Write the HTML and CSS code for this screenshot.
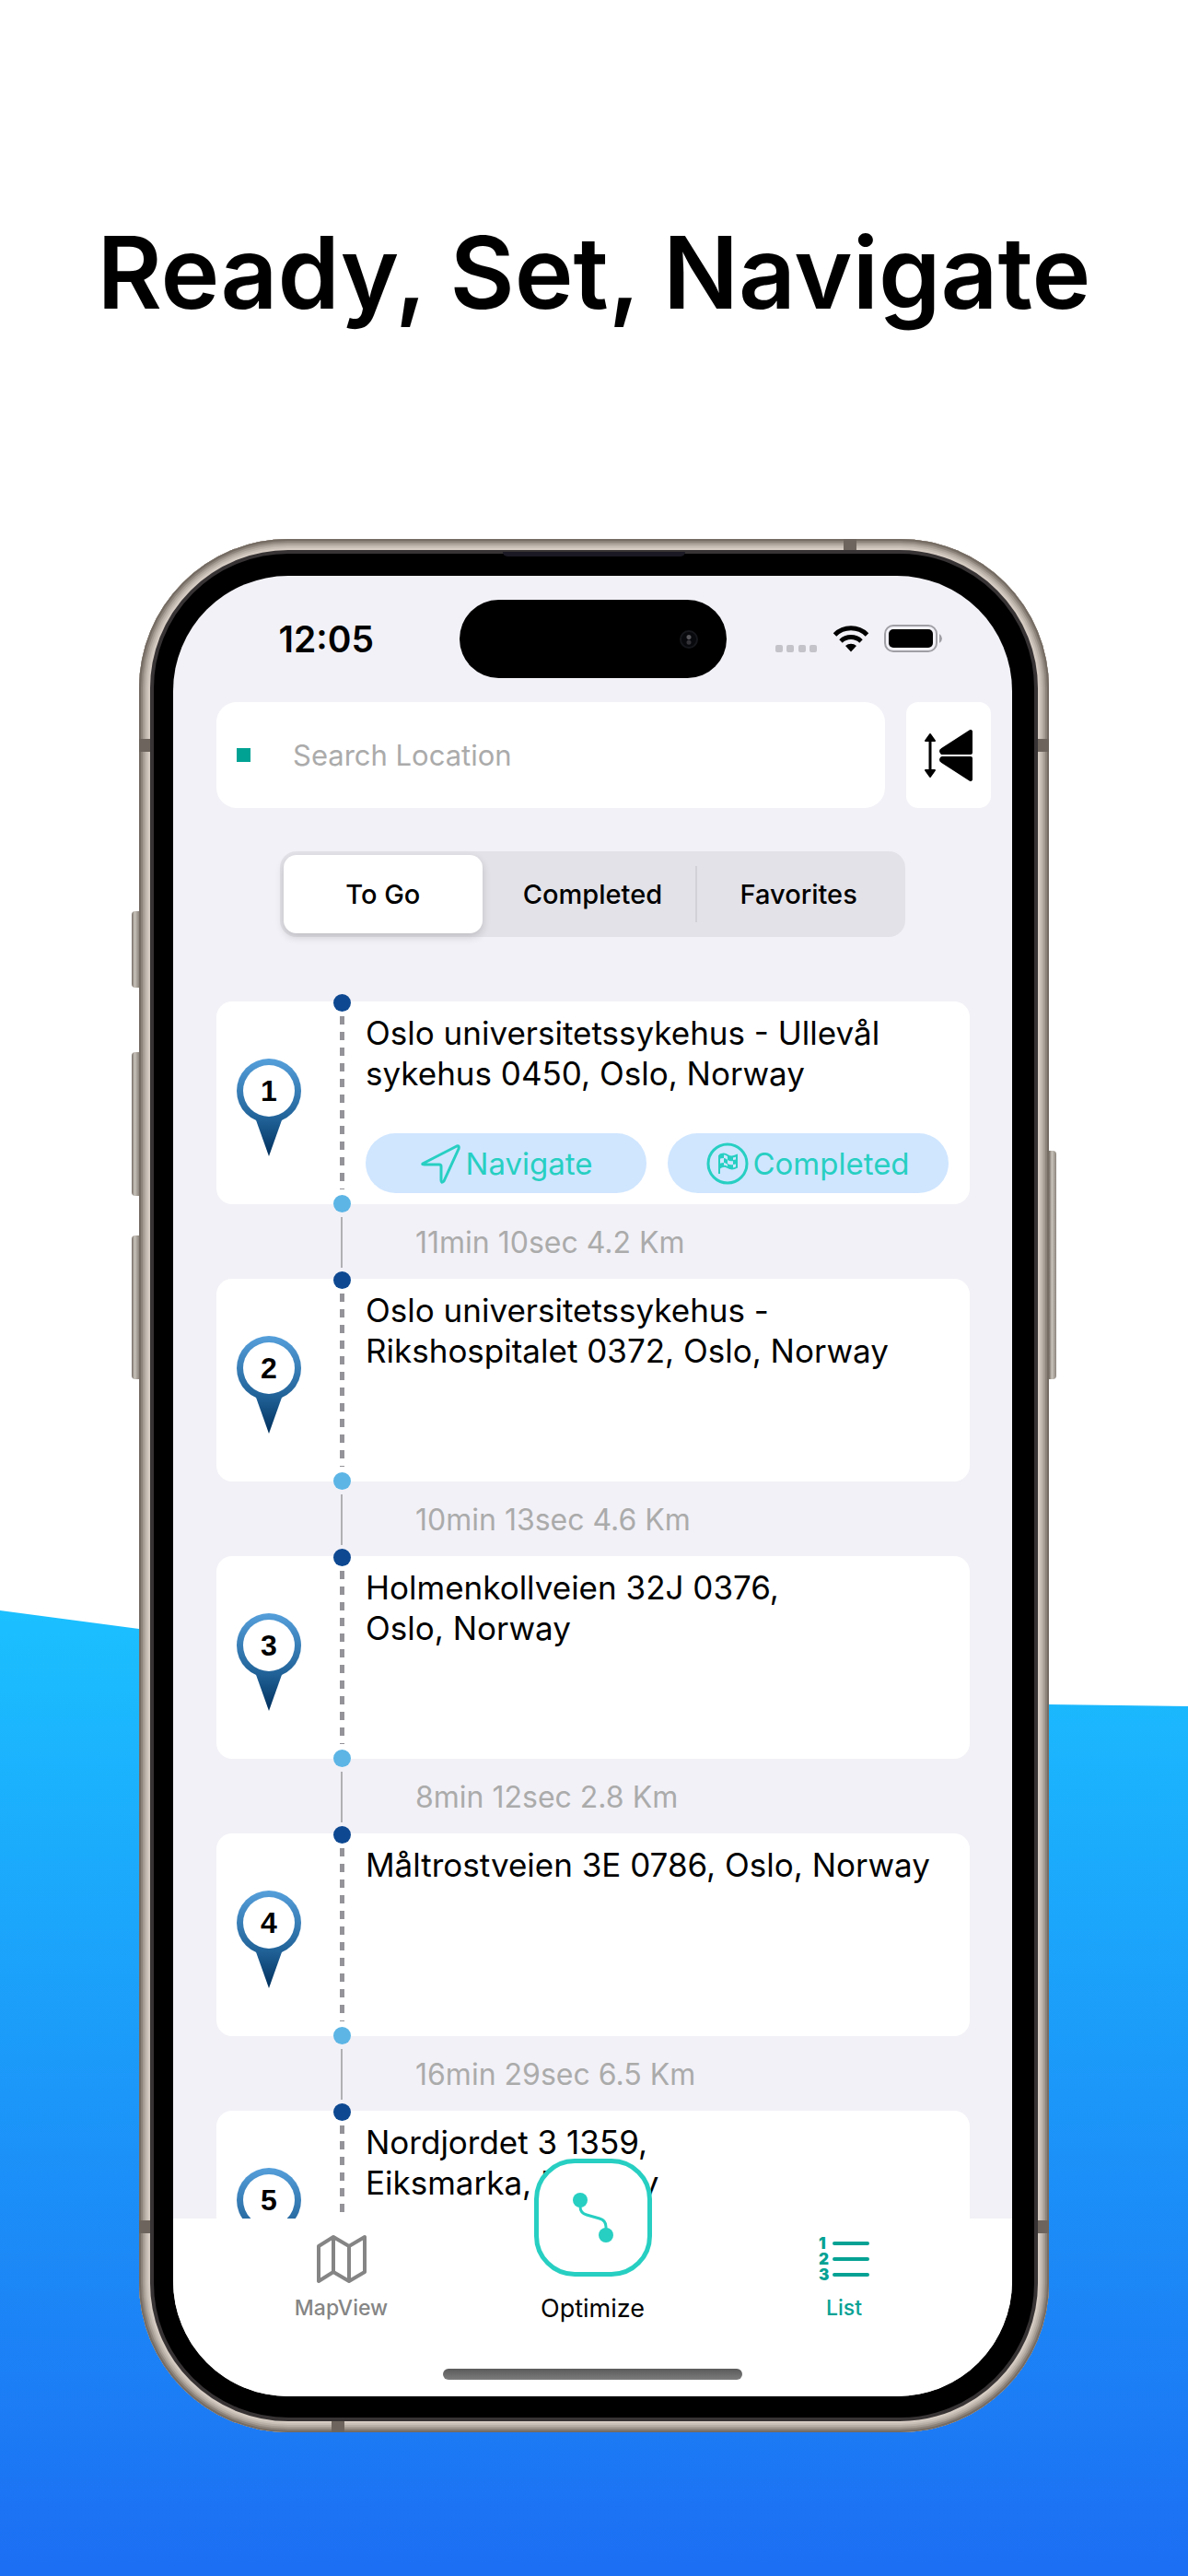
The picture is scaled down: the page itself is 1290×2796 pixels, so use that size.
FILE: index.html
```html
<!DOCTYPE html>
<html lang="en">
<head>
  <meta charset="UTF-8" />
  <meta name="viewport" content="width=device-width, initial-scale=1.0"/>
  <title>Ready, Set, Navigate</title>
  <link rel="stylesheet" href="styles.css">
</head>
<body>

  <svg class="wave" viewBox="0 0 1290 1048" preserveAspectRatio="none" aria-hidden="true">
    <defs>
      <linearGradient id="sky" x1="0" y1="0" x2="0" y2="1">
        <stop offset="0" stop-color="#1bc0ff"/>
        <stop offset="1" stop-color="#1c6ef3"/>
      </linearGradient>
    </defs>
    <path fill="url(#sky)" d="M0 0 L151 20 Q700 96 1139 102 L1290 104 V1048 H0 Z"/>
  </svg>

  <!-- shared shapes -->
  <svg class="defs" aria-hidden="true">
    <defs>
      <linearGradient id="pinFill" gradientUnits="userSpaceOnUse" x1="0" y1="0" x2="0" y2="106">
        <stop offset="0" stop-color="#559fdb"/>
        <stop offset="0.6" stop-color="#22649a"/>
        <stop offset="1" stop-color="#002f5c"/>
      </linearGradient>
      <symbol id="pin" viewBox="0 0 70 106">
        <circle cx="35" cy="35" r="35" fill="url(#pinFill)"/>
        <path fill="url(#pinFill)" d="M20 64 H50 L35 106 Z"/>
        <circle cx="35" cy="35" r="28" fill="#fff"/>
      </symbol>
    </defs>
  </svg>

  <h1 class="headline">Ready, Set, Navigate</h1>

  <div class="phone">
    <span class="side-btn action"></span>
    <span class="side-btn vol-up"></span>
    <span class="side-btn vol-down"></span>
    <span class="side-btn power"></span>
    <span class="band band-top"></span>
    <span class="band band-bottom"></span>
    <span class="band band-l1"></span>
    <span class="band band-r1"></span>
    <span class="band band-l2"></span>
    <span class="band band-r2"></span>

    <div class="bezel">
      <span class="speaker"></span>
      <div class="screen">

        <div class="status-bar">
          <span class="time">12:05</span>
          <div class="island"><span class="camera"></span></div>
          <div class="status-icons">
            <svg width="46" height="30" viewBox="0 0 46 30" fill="#c4c3c9">
              <rect x="0" y="22" width="8" height="8" rx="2"/>
              <rect x="12" y="22" width="8" height="8" rx="2"/>
              <rect x="25" y="22" width="8" height="8" rx="2"/>
              <rect x="37" y="22" width="8" height="8" rx="2"/>
            </svg>
            <svg width="40" height="30" viewBox="0 0 40 30" fill="none" stroke="#000" stroke-width="5">
              <path d="M2.500 11 A25 25 0 0 1 37.500 11"/>
              <path d="M9 18 A16 16 0 0 1 31 18"/>
              <path fill="#000" stroke="none" d="M20 29.500 L14 23 A9 9 0 0 1 26 23 Z"/>
            </svg>
            <svg width="64" height="30" viewBox="0 0 64 30">
              <rect x="1" y="1" width="56" height="28" rx="9" fill="none" stroke="#a09fa5" stroke-width="2"/>
              <rect x="5" y="5" width="48" height="20" rx="5"/>
              <path d="M60 10 q3 2 3 5 t-3 5 z" fill="#a09fa5"/>
            </svg>
          </div>
        </div>

        <form class="search-row">
          <label class="search-box">
            <span class="marker"></span>
            <input type="text" placeholder="Search Location" aria-label="Search Location">
          </label>
          <button type="button" class="flip-btn" aria-label="Reverse route">
            <svg width="54" height="58" viewBox="0 0 54 58" stroke-linejoin="round" stroke="#000">
              <path d="M7 12 V46" stroke-width="3"/>
              <path d="M7 6 L12 13 H2 Z M7 52 L12 45 H2 Z" stroke-width="2"/>
              <path d="M51 3 V26 H20 Q18 24 20 23 Z M51 55 V32 H20 Q18 34 20 35 Z" stroke-width="4"/>
            </svg>
          </button>
        </form>

        <div class="segments">
          <button class="segment active">To Go</button>
          <button class="segment">Completed</button>
          <button class="segment">Favorites</button>
        </div>

        <div class="stops">
          <div class="stop">
            <div class="pin"><svg width="70" height="106"><use href="#pin"/></svg><b>1</b></div>
            <div class="rail"></div>
            <div class="info">
              <p class="address">Oslo universitetssykehus - Ullevål<br>sykehus 0450, Oslo, Norway</p>
              <div class="actions">
                <button class="pill">
                  <svg width="46" height="46" viewBox="0 0 46 46" fill="none" stroke="currentColor" stroke-width="3" stroke-linejoin="round">
                    <path d="M3 23 L40 4 Q43 3 42 7 L26 42 Q23 45 23 41 V26 Q23 24 21 24 H5 Q2 24 3 23 Z"/>
                  </svg>
                  Navigate
                </button>
                <button class="pill">
                  <svg width="46" height="46" viewBox="0 0 46 46" fill="none" stroke="currentColor">
                    <circle cx="23" cy="23" r="21" stroke-width="3"/>
                    <path stroke-width="2" d="M14 34 V14 M14 14 Q19 11 23 14 T33 14 V27 Q28 30 23 27 T14 28"/>
                    <path fill="currentColor" stroke="none" d="M14 13 q2 -1 5 -1 v5 q-3 0 -5 1z M23 14 q3 2 6 1 v5 q-3 1 -6 -1z M19 17 q2 0 4 2 v5 q-2 -2 -4 -2z M29 19 q2 0 4 -1 v5 q-2 1 -4 1z M14 23 q3 -1 5 -1 v5 q-3 0 -5 1z M23 23 q3 2 6 1 v4 q-3 1 -6 -1z"/>
                  </svg>
                  Completed
                </button>
              </div>
            </div>
          </div>
          <div class="leg">11min 10sec 4.2 Km</div>

          <div class="stop">
            <div class="pin"><svg width="70" height="106"><use href="#pin"/></svg><b>2</b></div>
            <div class="rail"></div>
            <div class="info">
              <p class="address">Oslo universitetssykehus -<br>Rikshospitalet 0372, Oslo, Norway</p>
            </div>
          </div>
          <div class="leg">10min 13sec 4.6 Km</div>

          <div class="stop">
            <div class="pin"><svg width="70" height="106"><use href="#pin"/></svg><b>3</b></div>
            <div class="rail"></div>
            <div class="info">
              <p class="address">Holmenkollveien 32J 0376,<br>Oslo, Norway</p>
            </div>
          </div>
          <div class="leg">8min 12sec 2.8 Km</div>

          <div class="stop">
            <div class="pin"><svg width="70" height="106"><use href="#pin"/></svg><b>4</b></div>
            <div class="rail"></div>
            <div class="info">
              <p class="address">Måltrostveien 3E 0786, Oslo, Norway</p>
            </div>
          </div>
          <div class="leg">16min 29sec 6.5 Km</div>

          <div class="stop">
            <div class="pin"><svg width="70" height="106"><use href="#pin"/></svg><b>5</b></div>
            <div class="rail"></div>
            <div class="info">
              <p class="address">Nordjordet 3 1359,<br>Eiksmarka, Norway</p>
            </div>
          </div>
        </div>

        <nav class="tab-bar">
          <a href="#map" class="tab">
            <svg width="56" height="56" viewBox="0 0 56 56" fill="none" stroke="currentColor" stroke-width="4" stroke-linejoin="round">
              <path d="M3 14 L19 4 L36 14 L53 4 V42 L36 52 L19 42 L3 52 Z M19 4 V42 M36 14 V52"/>
            </svg>
            MapView
          </a>
          <button class="tab optimize">
            <span class="optimize-icon">
              <svg width="46" height="56" viewBox="0 0 46 56" fill="none" stroke="currentColor" stroke-width="3">
                <path d="M9 9 V16 Q9 23 16 25 L30 29 Q37 31 37 38 V46"/>
                <circle cx="9" cy="9" r="8" fill="currentColor" stroke="none"/>
                <circle cx="37" cy="47" r="8" fill="currentColor" stroke="none"/>
              </svg>
            </span>
            Optimize
          </button>
          <a href="#list" class="tab current">
            <svg width="56" height="56" viewBox="0 0 56 56" fill="none" stroke="currentColor" stroke-width="4" stroke-linecap="round">
              <path d="M17 11 H53 M17 28 H53 M17 45 H53"/>
              <g class="digits">
                <text x="0" y="17">1</text>
                <text x="0" y="34">2</text>
                <text x="0" y="51">3</text>
              </g>
            </svg>
            List
          </a>
        </nav>
        <div class="home-area"><span class="home-indicator"></span></div>

      </div>
    </div>
  </div>

</body>
</html>
```
FILE: styles.css
```css
:root {
  --screen-bg: #f2f1f7;
  --teal: #27cfc2;
  --teal-dark: #05a294;
  --pill: #d0e6ff;
  --muted: #ababab;
  --dot-dark: #0d4891;
  --dot-light: #5cb5e5;
}

* {
  box-sizing: border-box;
}

body {
  margin: 0;
  position: relative;
  min-height: 100vh;
  padding-bottom: 156px;
  background: #fff;
  color: #000;
  font-family: Inter, "Liberation Sans", sans-serif;
  overflow-x: hidden;
}

button,
input {
  font-family: inherit;
  color: inherit;
  border: none;
  background: none;
  padding: 0;
}

button {
  cursor: pointer;
}

.defs {
  position: absolute;
  width: 0;
  height: 0;
}

.wave {
  position: absolute;
  left: 0;
  bottom: 0;
  width: 100%;
  height: 1048px;
  z-index: -1;
}

.headline {
  margin: 0;
  padding: 224px 0 217px;
  font-size: 108px;
  line-height: 144px;
  font-weight: 600;
  text-align: center;
  white-space: nowrap;
}

/* phone body */
.phone {
  position: relative;
  width: 90%;
  max-width: 988px;
  aspect-ratio: 988 / 2055;
  margin: 0 auto;
  padding: 12px;
  border-radius: 162px;
  background: #d6ccc3;
  box-shadow: inset 0 0 0 2px #756c64,
              inset 0 0 0 4px #8c837b,
              inset 0 0 0 6px #a59c93,
              inset 0 0 0 8px #b9b0a7,
              inset 0 0 0 10px #c9c0b7;
}

.bezel {
  position: relative;
  height: 100%;
  padding: 24px 24px 23px 21px;
  border: 4px solid #373334;
  border-radius: 150px;
  background: #000;
}

.speaker {
  position: absolute;
  top: -2px;
  left: 50%;
  width: 198px;
  height: 5px;
  margin-left: -99px;
  border-radius: 0 0 5px 5px;
  background: #1b1a24;
}

.side-btn {
  position: absolute;
  left: -8px;
  width: 8px;
  border-radius: 4px 0 0 4px;
  background: linear-gradient(90deg, #746c64, #c8c3bb 40%, #8d867e);
}

.action { top: 404px; height: 83px; }
.vol-up { top: 557px; height: 156px; }
.vol-down { top: 756px; height: 156px; }

.power {
  top: 664px;
  left: auto;
  right: -8px;
  height: 248px;
  border-radius: 0 4px 4px 0;
}

.band {
  position: absolute;
  width: 12px;
  height: 14px;
  background: #6d655d;
}

.band-l1 { left: 0; top: 217px; }
.band-r1 { right: 0; top: 217px; }
.band-l2 { left: 0; bottom: 216px; }
.band-r2 { right: 0; bottom: 216px; }
.band-top { right: 209px; top: 0; width: 14px; height: 12px; }
.band-bottom { left: 209px; bottom: 0; width: 14px; height: 12px; }

.screen {
  display: flex;
  flex-direction: column;
  height: 100%;
  border-radius: 125px;
  background: var(--screen-bg);
  overflow: hidden;
}

/* status bar */
.status-bar {
  display: grid;
  grid-template-columns: 1fr 290px 1fr;
  align-items: center;
  padding-top: 26px;
}

.time {
  padding-left: 22px;
  text-align: center;
  font-size: 39px;
  font-weight: 600;
}

.island {
  display: flex;
  align-items: center;
  justify-content: flex-end;
  height: 85px;
  padding-right: 31px;
  border-radius: 43px;
  background: #000;
}

.camera {
  width: 20px;
  height: 20px;
  border-radius: 50%;
  background: radial-gradient(circle at 50% 35%, #55555a 0 2px, transparent 3px),
              radial-gradient(circle at 50% 70%, #333338 0 2px, transparent 3px),
              #08090c;
  border: 2px solid #15171c;
}

.status-icons {
  display: flex;
  justify-content: flex-end;
  gap: 16px;
  padding-right: 75px;
  padding-bottom: 2px;
}

/* search */
.search-row {
  display: flex;
  gap: 23px;
  margin: 0;
  padding: 26px 23px 0 47px;
}

.search-box {
  flex: 1;
  display: flex;
  align-items: center;
  gap: 46px;
  height: 115px;
  padding: 0 22px;
  border-radius: 22px;
  background: #fff;
}

.marker {
  width: 15px;
  height: 15px;
  background: #00a294;
}

.search-box input {
  flex: 1;
  min-width: 0;
  font-size: 31px;
  outline: none;
}

.search-box input::placeholder {
  color: var(--muted);
  opacity: 1;
}

.flip-btn {
  display: flex;
  align-items: center;
  justify-content: center;
  width: 92px;
  border-radius: 13px;
  background: #fff;
}

/* segmented control */
.segments {
  display: grid;
  grid-template-columns: repeat(3, 1fr);
  height: 93px;
  margin: 47px 116px 0;
  padding: 4px;
  border-radius: 18px;
  background: #e3e2e8;
}

.segment {
  position: relative;
  font-size: 29px;
  font-weight: 500;
}

.segment.active {
  margin-right: 8px;
  border-radius: 14px;
  background: #fff;
  box-shadow: 0 4px 10px rgba(0, 0, 0, 0.16);
}

.segment:last-child::before {
  content: "";
  position: absolute;
  left: 0;
  top: 12px;
  bottom: 12px;
  width: 2px;
  background: #d2d1d7;
}

/* route list */
.stops {
  flex: 1;
  min-height: 0;
  margin-top: 50px;
  padding: 20px 46px 0 47px;
  overflow: hidden;
}

.stop {
  display: grid;
  grid-template-columns: 114px 44px 1fr;
  height: 220px;
  border-radius: 17px;
  background: #fff;
}

.pin {
  position: relative;
  justify-self: center;
  align-self: center;
  width: 70px;
  height: 106px;
  margin-top: 10px;
}

.pin b {
  position: absolute;
  top: 0;
  left: 0;
  width: 70px;
  font-family: "Liberation Sans", Arial, sans-serif;
  font-size: 32px;
  line-height: 70px;
  text-align: center;
}

.rail {
  position: relative;
  width: 5px;
  margin: 16px auto;
  background: repeating-linear-gradient(#949399 0 9px, transparent 9px 17px);
}

.rail::before,
.rail::after {
  content: "";
  position: absolute;
  left: -7px;
  width: 19px;
  height: 19px;
  border-radius: 50%;
}

.rail::before {
  top: -24px;
  background: var(--dot-dark);
}

.rail::after {
  bottom: -25px;
  background: var(--dot-light);
}

.info {
  display: flex;
  flex-direction: column;
  justify-content: space-between;
  padding: 12px 23px 12px 4px;
}

.address {
  margin: 0;
  font-size: 35px;
  line-height: 44px;
  white-space: nowrap;
}

.actions {
  display: grid;
  grid-template-columns: 1fr 1fr;
  gap: 23px;
}

.pill {
  display: flex;
  align-items: center;
  justify-content: center;
  gap: 4px;
  height: 65px;
  border-radius: 33px;
  background: var(--pill);
  color: var(--teal);
  font-size: 33px;
}

.leg {
  position: relative;
  height: 81px;
  padding-left: 216px;
  color: var(--muted);
  font-size: 32px;
  line-height: 84px;
}

.leg::before {
  content: "";
  position: absolute;
  left: 135px;
  top: 14px;
  bottom: 12px;
  width: 2px;
  background: #b0b0b4;
}

/* bottom navigation */
.tab-bar {
  position: relative;
  display: grid;
  grid-template-columns: 1fr 1fr 1fr;
  padding: 0 46px;
  background: #fff;
}

.tab {
  display: flex;
  flex-direction: column;
  align-items: center;
  gap: 10px;
  padding-top: 16px;
  color: #858585;
  font-size: 23px;
  line-height: 30px;
  font-weight: 500;
  text-decoration: none;
}

.tab.current {
  color: var(--teal-dark);
}

.tab .digits {
  fill: currentColor;
  stroke: none;
  font-size: 17px;
  font-weight: 900;
}

.tab.optimize {
  margin-top: -65px;
  padding-top: 0;
  gap: 20px;
  color: #000;
  font-size: 27px;
  font-weight: 400;
}

.optimize-icon {
  display: flex;
  align-items: center;
  justify-content: center;
  width: 128px;
  height: 128px;
  border: 5px solid var(--teal);
  border-radius: 44px;
  background: #fff;
  color: var(--teal);
}

.home-area {
  display: flex;
  justify-content: center;
  align-items: flex-end;
  height: 80px;
  padding-bottom: 18px;
  background: #fff;
}

.home-indicator {
  width: 325px;
  height: 12px;
  border-radius: 6px;
  background: linear-gradient(#5a5a5a, #7c7c7c);
}
```
